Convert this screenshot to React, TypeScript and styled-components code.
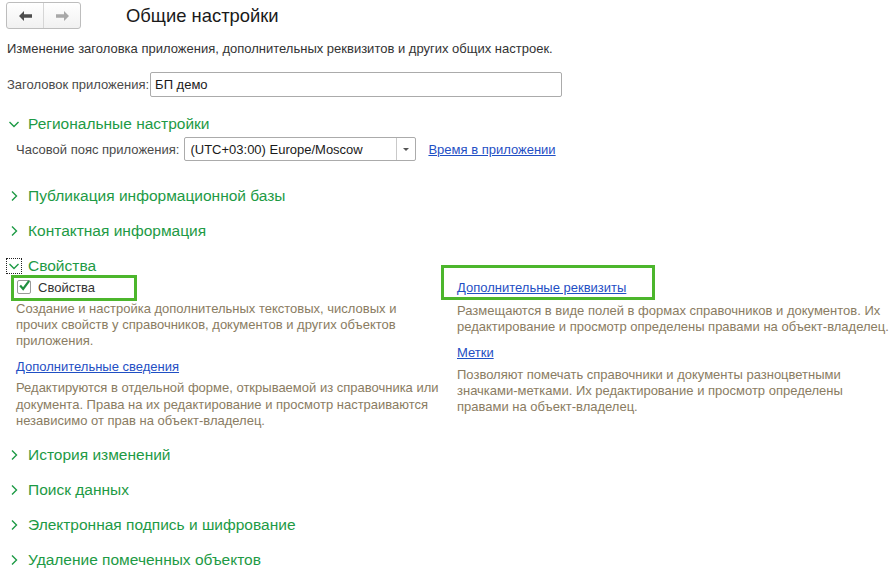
import styled, { createGlobalStyle } from "styled-components";

const GlobalStyle = createGlobalStyle`
  html, body {
    margin: 0;
    padding: 0;
    background: #ffffff;
  }
  body {
    font-family: "Liberation Sans", Arial, sans-serif;
    font-size: 13px;
    color: #4a4a4a;
  }
`;

const GREEN = "#1d9a45";
const LINK = "#1f4fc4";
const HINT = "#8a7c62";

type Group = {
  title: string;
  open?: boolean;
  focused?: boolean;
};

const ArrowLeft = ({ color }: { color: string }) => (
  <svg width="13" height="10" viewBox="0 0 13 10">
    <path d="M0 5 L5 0 L5 3.2 L13 3.2 L13 6.8 L5 6.8 L5 10 Z" fill={color} />
  </svg>
);

const ArrowRight = ({ color }: { color: string }) => (
  <svg width="13" height="10" viewBox="0 0 13 10">
    <path d="M13 5 L8 0 L8 3.2 L0 3.2 L0 6.8 L8 6.8 L8 10 Z" fill={color} />
  </svg>
);

const Chevron = ({ open }: { open?: boolean }) => (
  <svg width="12" height="12" viewBox="0 0 12 12">
    {open ? (
      <polyline points="1.5,4 6,8.5 10.5,4" fill="none" stroke={GREEN} strokeWidth="1.4" />
    ) : (
      <polyline points="4,1.5 8.5,6 4,10.5" fill="none" stroke={GREEN} strokeWidth="1.4" />
    )}
  </svg>
);

const Check = () => (
  <svg width="14" height="14" viewBox="0 0 14 14">
    <polyline points="2.5,6.5 6,10.5 13,1" fill="none" stroke="#1f8f3f" strokeWidth="2.6" />
  </svg>
);

const GroupHeader = ({ title, open, focused }: Group) => (
  <Header>
    <Toggle $focused={focused}>
      <Chevron open={open} />
    </Toggle>
    <HeaderTitle>{title}</HeaderTitle>
  </Header>
);

const App = () => {
  return (
    <>
      <GlobalStyle />
      <Page>
        <TopBar>
          <NavGroup>
            <NavButton>
              <ArrowLeft color="#4d4d4d" />
            </NavButton>
            <NavButton>
              <ArrowRight color="#a8a8a8" />
            </NavButton>
          </NavGroup>
          <Title>Общие настройки</Title>
        </TopBar>

        <Intro>
          Изменение заголовка приложения, дополнительных реквизитов и других общих настроек.
        </Intro>

        <FieldRow>
          <FieldLabel>Заголовок приложения:</FieldLabel>
          <TextInput>БП демо</TextInput>
        </FieldRow>

        <Groups>
          <Section>
            <GroupHeader title="Региональные настройки" open />
            <RegionalRow>
              <FieldLabel>Часовой пояс приложения:</FieldLabel>
              <Select>
                <SelectValue>(UTC+03:00) Europe/Moscow</SelectValue>
                <SelectButton>
                  <Caret />
                </SelectButton>
              </Select>
              <Link>Время в приложении</Link>
            </RegionalRow>
          </Section>

          <GroupHeader title="Публикация информационной базы" />
          <GroupHeader title="Контактная информация" />

          <Section>
            <GroupHeader title="Свойства" open focused />
            <Columns>
              <Column>
                <CheckRow>
                  <CheckBox>
                    <Check />
                  </CheckBox>
                  <CheckLabel>Свойства</CheckLabel>
                  <Highlight $top={-4} $left={-6} $right={-42} $bottom={-6} />
                </CheckRow>
                <Hint $gap={6}>
                  Создание и настройка дополнительных текстовых, числовых и прочих свойств у
                  справочников, документов и других объектов приложения.
                </Hint>
                <LinkRow $gap={10}>
                  <Link>Дополнительные сведения</Link>
                </LinkRow>
                <Hint $gap={5} $tall>
                  Редактируются в отдельной форме, открываемой из справочника или документа. Права
                  на их редактирование и просмотр настраиваются независимо от прав на
                  объект-владелец.
                </Hint>
              </Column>

              <Column>
                <LinkRow $gap={1}>
                  <Link>Дополнительные реквизиты</Link>
                  <Highlight $top={-15} $left={-16} $right={-29} $bottom={-4} />
                </LinkRow>
                <Hint $gap={7}>
                  Размещаются в виде полей в формах справочников и документов. Их редактирование и
                  просмотр определены правами на объект-владелец.
                </Hint>
                <LinkRow $gap={10}>
                  <Link>Метки</Link>
                </LinkRow>
                <Hint $gap={6}>
                  Позволяют помечать справочники и документы разноцветными значками-метками. Их
                  редактирование и просмотр определены правами на объект-владелец.
                </Hint>
              </Column>
            </Columns>
          </Section>

          <GroupHeader title="История изменений" />
          <GroupHeader title="Поиск данных" />
          <GroupHeader title="Электронная подпись и шифрование" />
          <GroupHeader title="Удаление помеченных объектов" />
        </Groups>
      </Page>
    </>
  );
};

export default App;

const Page = styled.div`
  width: 895px;
  height: 573px;
  overflow: hidden;
  box-sizing: border-box;
  padding: 2px 6px 0 6px;
`;

const TopBar = styled.div`
  display: flex;
  align-items: center;
  height: 27px;
`;

const NavGroup = styled.div`
  display: flex;
  height: 27px;
  box-sizing: border-box;
  border: 1px solid #bdbdbd;
  border-radius: 3px;
  background: linear-gradient(#ffffff, #f1f1f1);
`;

const NavButton = styled.div`
  width: 36px;
  display: flex;
  align-items: center;
  justify-content: center;

  & + & {
    border-left: 1px solid #d6d6d6;
  }
`;

const Title = styled.div`
  margin-left: 45px;
  font-size: 18.4px;
  color: #1a1a1a;
  line-height: 27px;
`;

const Intro = styled.div`
  margin-top: 12px;
  padding-left: 1px;
  line-height: 16px;
  color: #333333;
`;

const FieldRow = styled.div`
  display: flex;
  align-items: center;
  margin-top: 15px;
  padding-left: 1px;
`;

const FieldLabel = styled.span`
  color: #4a4a4a;
  margin-right: 1px;
  white-space: nowrap;
`;

const TextInput = styled.div`
  width: 412px;
  height: 25px;
  box-sizing: border-box;
  border: 1px solid #ababab;
  border-radius: 2px;
  padding: 0 4px;
  display: flex;
  align-items: center;
  color: #1a1a1a;
`;

const Groups = styled.div`
  display: flex;
  flex-direction: column;
  gap: 15px;
  margin-top: 17px;
`;

const Section = styled.div`
  display: flex;
  flex-direction: column;
`;

const Header = styled.div`
  display: flex;
  align-items: center;
  height: 20px;
`;

const Toggle = styled.div<{ $focused?: boolean }>`
  width: 16px;
  height: 16px;
  box-sizing: border-box;
  display: flex;
  align-items: center;
  justify-content: center;
  border: 1px dotted ${(p) => (p.$focused ? "#222" : "transparent")};
  margin-right: 6px;
`;

const HeaderTitle = styled.span`
  font-size: 15.5px;
  color: ${GREEN};
`;

const RegionalRow = styled.div`
  display: flex;
  align-items: center;
  margin-top: 3px;
  padding: 0 0 10px 10px;
`;

const Select = styled.div`
  display: flex;
  width: 232px;
  height: 24px;
  box-sizing: border-box;
  border: 1px solid #ababab;
  border-radius: 2px;
  margin-left: 4px;
`;

const SelectValue = styled.div`
  flex: 1;
  display: flex;
  align-items: center;
  padding-left: 5px;
  color: #1a1a1a;
`;

const SelectButton = styled.div`
  width: 18px;
  border-left: 1px solid #c9c9c9;
  display: flex;
  align-items: center;
  justify-content: center;
`;

const Caret = styled.div`
  width: 0;
  height: 0;
  border-left: 3px solid transparent;
  border-right: 3px solid transparent;
  border-top: 3px solid #555;
`;

const Link = styled.span`
  color: ${LINK};
  text-decoration: underline;
  margin-left: 12px;
  white-space: nowrap;
`;

const Columns = styled.div`
  display: grid;
  grid-template-columns: 423px 432px;
  column-gap: 18px;
  padding: 0 0 0 10px;
  margin-top: 3px;

  ${Link} {
    margin-left: 0;
  }
`;

const Column = styled.div`
  display: flex;
  flex-direction: column;
`;

const CheckRow = styled.div`
  position: relative;
  align-self: flex-start;
  display: flex;
  align-items: center;
  height: 16px;
  margin-left: 1px;
`;

const CheckBox = styled.div`
  width: 14px;
  height: 14px;
  box-sizing: border-box;
  border: 1px solid #9a9a9a;
  border-radius: 2px;
  display: flex;
  align-items: flex-end;
  justify-content: center;
  background: #fff;
`;

const CheckLabel = styled.span`
  margin-left: 7px;
  color: #333;
`;

const Highlight = styled.div<{ $top: number; $left: number; $right: number; $bottom: number }>`
  position: absolute;
  top: ${(p) => p.$top}px;
  left: ${(p) => p.$left}px;
  right: ${(p) => p.$right}px;
  bottom: ${(p) => p.$bottom}px;
  border: 3px solid #4cb62c;
  pointer-events: none;
`;

const Hint = styled.div<{ $gap: number; $tall?: boolean }>`
  margin-top: ${(p) => p.$gap}px;
  line-height: ${(p) => (p.$tall ? 16.5 : 16)}px;
  color: ${HINT};
`;

const LinkRow = styled.div<{ $gap: number }>`
  position: relative;
  align-self: flex-start;
  margin-top: ${(p) => p.$gap}px;
  line-height: 16px;
`;
